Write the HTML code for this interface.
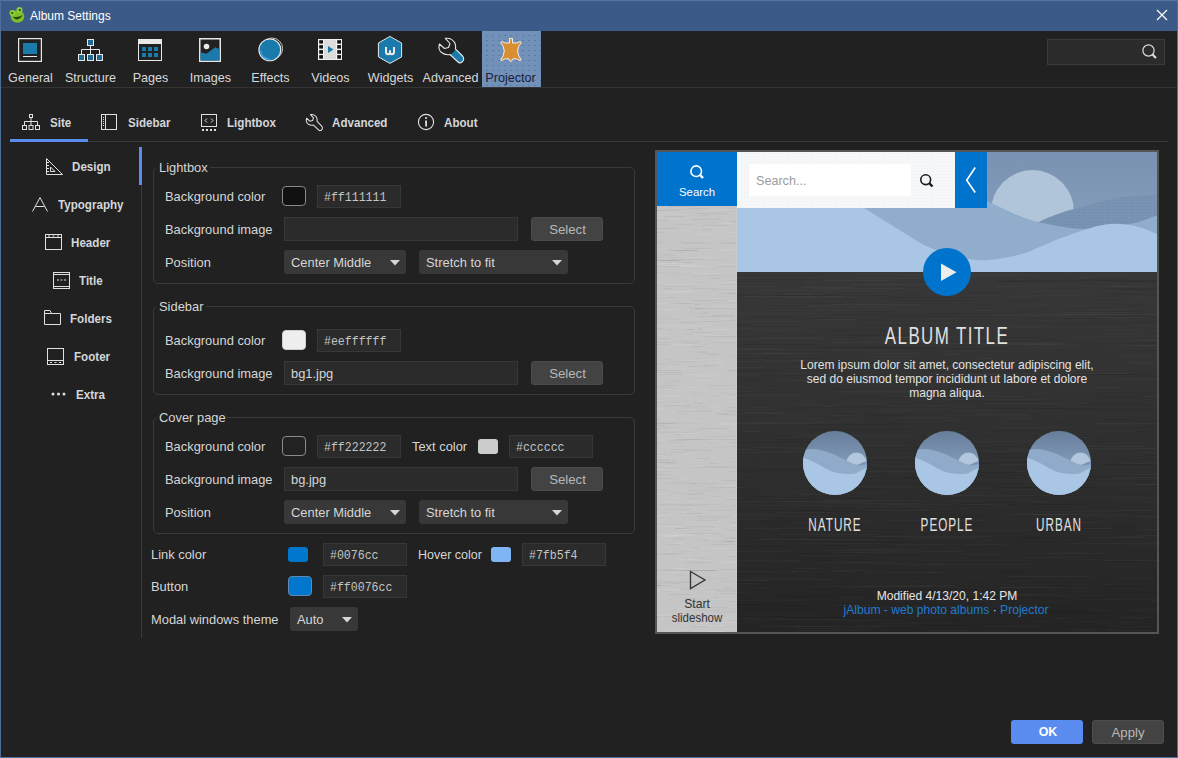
<!DOCTYPE html>
<html><head><meta charset="utf-8"><title>Album Settings</title>
<style>
html,body{margin:0;padding:0;}
body{width:1178px;height:758px;overflow:hidden;background:#212121;position:relative;font-family:"Liberation Sans", sans-serif;}
.t{position:absolute;white-space:pre;}
.r{position:absolute;box-sizing:border-box;}
svg.r{overflow:visible;}
</style></head><body>

<div class="r" style="left:0px;top:0px;width:1178px;height:31px;background:#3b5a87;"></div>
<div class="r" style="left:0px;top:0px;width:1178px;height:1px;background:#5674a0;"></div>
<svg class="r" style="left:8px;top:6px;" width="18" height="18" viewBox="0 0 18 18">
<ellipse cx="9.5" cy="10.5" rx="6.8" ry="6.2" fill="#7fbf2a"/>
<circle cx="4.5" cy="7" r="3" fill="#8fcf3a"/>
<circle cx="11.5" cy="4" r="3" fill="#8fcf3a"/>
<circle cx="4.3" cy="7" r="1.1" fill="#234d07"/>
<circle cx="11.8" cy="4.2" r="1.1" fill="#234d07"/>
<path d="M4.5 10.5 Q9.5 17 14.8 9 Q10 12 4.5 10.5Z" fill="#1e4a06"/>
</svg>
<div class="t" style="left:30px;top:9.84px;font-size:12px;line-height:12px;color:#ffffff;font-weight:normal;font-family:'Liberation Sans', sans-serif;">Album Settings</div>
<svg class="r" style="left:1156px;top:9px;" width="12" height="12" viewBox="0 0 12 12"><path d="M1 1L11 11M11 1L1 11" stroke="#fff" stroke-width="1.2"/></svg>
<div class="r" style="left:482px;top:31px;width:59px;height:56px;background-color:#7291b9;background-image:radial-gradient(circle, rgba(70,100,160,0.5) 0.5px, transparent 0.9px);background-size:6px 5px;background-position:2px 2px;"></div>
<div class="r" style="left:1px;top:87px;width:1176px;height:1px;background:#343434;"></div>
<div class="t" style="left:-169.5px;width:400px;text-align:center;top:71.83px;font-size:12.6px;line-height:12.6px;color:#d9d9d9;font-weight:normal;font-family:'Liberation Sans', sans-serif;">General</div>
<div class="t" style="left:-109.5px;width:400px;text-align:center;top:71.83px;font-size:12.6px;line-height:12.6px;color:#d9d9d9;font-weight:normal;font-family:'Liberation Sans', sans-serif;">Structure</div>
<div class="t" style="left:-49.5px;width:400px;text-align:center;top:71.83px;font-size:12.6px;line-height:12.6px;color:#d9d9d9;font-weight:normal;font-family:'Liberation Sans', sans-serif;">Pages</div>
<div class="t" style="left:10.5px;width:400px;text-align:center;top:71.83px;font-size:12.6px;line-height:12.6px;color:#d9d9d9;font-weight:normal;font-family:'Liberation Sans', sans-serif;">Images</div>
<div class="t" style="left:70.5px;width:400px;text-align:center;top:71.83px;font-size:12.6px;line-height:12.6px;color:#d9d9d9;font-weight:normal;font-family:'Liberation Sans', sans-serif;">Effects</div>
<div class="t" style="left:130.5px;width:400px;text-align:center;top:71.83px;font-size:12.6px;line-height:12.6px;color:#d9d9d9;font-weight:normal;font-family:'Liberation Sans', sans-serif;">Videos</div>
<div class="t" style="left:190.5px;width:400px;text-align:center;top:71.83px;font-size:12.6px;line-height:12.6px;color:#d9d9d9;font-weight:normal;font-family:'Liberation Sans', sans-serif;">Widgets</div>
<div class="t" style="left:250.5px;width:400px;text-align:center;top:71.83px;font-size:12.6px;line-height:12.6px;color:#d9d9d9;font-weight:normal;font-family:'Liberation Sans', sans-serif;">Advanced</div>
<div class="t" style="left:310.5px;width:400px;text-align:center;top:71.83px;font-size:12.6px;line-height:12.6px;color:#1c1c3c;font-weight:normal;font-family:'Liberation Sans', sans-serif;">Projector</div>
<svg class="r" style="left:18px;top:38px;" width="24" height="24" viewBox="0 0 24 24"><rect x="0.6" y="0.6" width="22.8" height="22.8" fill="none" stroke="#e8e8e8" stroke-width="1.2"/>
<rect x="5" y="5" width="14" height="11" fill="#1a7aab"/><rect x="5" y="18" width="14" height="1" fill="#e8e8e8"/></svg>
<svg class="r" style="left:78px;top:39px;" width="25" height="23" viewBox="0 0 25 23"><g stroke="#e8e8e8" stroke-width="1" fill="#1d6a93">
<rect x="9.5" y="0.5" width="6" height="6"/><rect x="0.5" y="15.5" width="6" height="6"/><rect x="9.5" y="15.5" width="6" height="6"/><rect x="18.5" y="15.5" width="6" height="6"/></g>
<path d="M12.5 6.5V15.5M3.5 15.5V10.5H21.5V15.5" stroke="#e8e8e8" stroke-width="1" fill="none"/></svg>
<svg class="r" style="left:138px;top:39px;" width="24" height="22" viewBox="0 0 24 22"><rect x="0.5" y="0.5" width="23" height="21" fill="none" stroke="#e8e8e8" stroke-width="1"/>
<rect x="0" y="0" width="24" height="5" fill="#e8e8e8"/>
<g fill="#1a7aab"><rect x="4" y="8" width="4" height="4"/><rect x="10" y="8" width="4" height="4"/><rect x="16" y="8" width="4" height="4"/>
<rect x="4" y="14" width="4" height="4"/><rect x="10" y="14" width="4" height="4"/><rect x="16" y="14" width="4" height="4"/></g></svg>
<svg class="r" style="left:199px;top:38px;" width="22" height="24" viewBox="0 0 22 24"><rect x="0.75" y="0.75" width="20.5" height="22.5" fill="none" stroke="#e8e8e8" stroke-width="1.5"/>
<circle cx="7.5" cy="8.5" r="2.8" fill="#e8e8e8"/>
<path d="M1.5 14.2 L7.5 15.8 L16.2 9.2 L20.5 11 V22.5 H1.5Z" fill="#1a7aab"/></svg>
<svg class="r" style="left:258px;top:37px;" width="25" height="25" viewBox="0 0 25 25"><circle cx="14" cy="11.6" r="10.6" fill="none" stroke="#c4c4c4" stroke-width="1"/>
<circle cx="13.6" cy="12" r="9.4" fill="none" stroke="#7a7a7a" stroke-width="0.8"/>
<circle cx="11.8" cy="12.9" r="10.9" fill="#1a7aab" stroke="#e8e8e8" stroke-width="1.1"/>
<path d="M2.6 13.5 A 9.3 9.3 0 0 0 12 22.2" fill="none" stroke="#4fa8e6" stroke-width="1.1"/></svg>
<svg class="r" style="left:318px;top:39px;" width="24" height="21" viewBox="0 0 24 21"><rect x="0" y="0" width="24" height="21" fill="#f2f2f2"/><rect x="6" y="1" width="12" height="19" fill="#dcdcdc"/>
<g fill="#141414"><rect x="1.2" y="1.2" width="3.8" height="3.4"/><rect x="1.2" y="6.1" width="3.8" height="3.5"/><rect x="1.2" y="11.1" width="3.8" height="3.7"/><rect x="1.2" y="16.1" width="3.8" height="3.6"/>
<rect x="19.2" y="1.2" width="3.8" height="3.4"/><rect x="19.2" y="6.1" width="3.8" height="3.5"/><rect x="19.2" y="11.1" width="3.8" height="3.7"/><rect x="19.2" y="16.1" width="3.8" height="3.6"/></g>
<path d="M10 7L15.5 10.5L10 14Z" fill="#1a7aab"/></svg>
<svg class="r" style="left:378px;top:36px;" width="24" height="28" viewBox="0 0 24 28"><path d="M11.9 0.4 L23.6 7 V20.9 L11.9 27.4 L0.4 20.9 V7Z" fill="#1a7aab" stroke="#e8e8e8" stroke-width="1"/>
<path d="M8 11 V15.8 Q8 18.3 10 18.3 Q12 18.3 12 16.3 V14.3 M12 16.3 Q12 18.3 14 18.3 Q16 18.3 16 15.8 V11" fill="none" stroke="#f0e8e4" stroke-width="2"/></svg>
<svg class="r" style="left:436px;top:35px;" width="32" height="32" viewBox="0 0 32 32"><path d="M9.3 3.4 C 14 2.5, 18.5 5.5, 19.3 9.5 C 19.8 11.5, 19.6 13, 19.4 13.8 L 26.5 21 C 28.3 22.8, 28 25.5, 26 27 C 24.5 28.2, 23 28, 22 27 L 14 19.5 C 11 20, 8 19.5, 5.5 17.5 C 3 15.5, 2.6 12, 3.4 9 L 8.5 13.5 L 12.5 12.5 L 14 8.5 Z" fill="#212121"/>
<path d="M19.4 13.8 L26.5 21 C 28.3 22.8 28 25.5 26 27 C 24.5 28.2 23 28 22 27 L14 19.5 C 16.5 18.5, 18.8 16.5, 19.4 13.8Z" fill="#1a7aab"/>
<path d="M9.3 3.4 C 14 2.5, 18.5 5.5, 19.3 9.5 C 19.8 11.5, 19.6 13, 19.4 13.8 L 26.5 21 C 28.3 22.8, 28 25.5, 26 27 C 24.5 28.2, 23 28, 22 27 L 14 19.5 C 11 20, 8 19.5, 5.5 17.5 C 3 15.5, 2.6 12, 3.4 9 L 8.5 13.5 L 12.5 12.5 L 14 8.5 Z" fill="none" stroke="#e8e8e8" stroke-width="1.1" stroke-linejoin="round"/></svg>
<svg class="r" style="left:496px;top:34px;" width="32" height="32" viewBox="0 0 32 32"><path d="M13.5 4.5 H16.5 V9 Q20 9.8 24.5 7.5 L25.2 8.6 Q22 12 21.6 17 Q22 22 25.3 26 L24.5 26.6 Q20 24 17 24.8 L15.2 27.4 L14.3 27.4 L13 24.8 Q9.5 24 5.3 26.6 L4.6 26 Q8 22 8.3 17 Q8 12 4.7 8.6 L5.4 7.5 Q9.5 9.8 13.5 9 Z" fill="#d98f30" stroke="#eef0f0" stroke-width="1"/></svg>
<div class="r" style="left:1047px;top:39px;width:118px;height:26px;background:#2b2b2b;border:1px solid #3b3b3b;"></div>
<svg class="r" style="left:1142px;top:44px;" width="16" height="16" viewBox="0 0 16 16"><circle cx="6.5" cy="6.5" r="5.6" fill="none" stroke="#dcdcdc" stroke-width="1.2"/><path d="M10.5 10.5 L14 14" stroke="#dcdcdc" stroke-width="2.2"/></svg>
<div class="r" style="left:88px;top:141px;width:1080px;height:1px;background:#3a3a3a;"></div>
<div class="r" style="left:10px;top:139px;width:78px;height:3px;background:#5b8def;"></div>
<div class="t" style="left:50px;top:116.84px;font-size:12.0px;line-height:12.0px;color:#d3d6da;font-weight:bold;font-family:'Liberation Sans', sans-serif;transform:scaleX(0.967);transform-origin:0 0;">Site</div>
<div class="t" style="left:128px;top:116.84px;font-size:12.0px;line-height:12.0px;color:#d3d6da;font-weight:bold;font-family:'Liberation Sans', sans-serif;transform:scaleX(0.967);transform-origin:0 0;">Sidebar</div>
<div class="t" style="left:227px;top:116.84px;font-size:12.0px;line-height:12.0px;color:#d3d6da;font-weight:bold;font-family:'Liberation Sans', sans-serif;transform:scaleX(0.967);transform-origin:0 0;">Lightbox</div>
<div class="t" style="left:332px;top:116.84px;font-size:12.0px;line-height:12.0px;color:#d3d6da;font-weight:bold;font-family:'Liberation Sans', sans-serif;transform:scaleX(0.967);transform-origin:0 0;">Advanced</div>
<div class="t" style="left:444px;top:116.84px;font-size:12.0px;line-height:12.0px;color:#d3d6da;font-weight:bold;font-family:'Liberation Sans', sans-serif;transform:scaleX(0.967);transform-origin:0 0;">About</div>
<svg class="r" style="left:22px;top:114px;" width="18" height="16" viewBox="0 0 18 16"><g fill="none" stroke="#e0e0e0" stroke-width="1"><rect x="7.5" y="0.5" width="3" height="3"/>
<rect x="0.5" y="11.5" width="4" height="4"/><rect x="7" y="11.5" width="4" height="4"/><rect x="13.5" y="11.5" width="4" height="4"/>
<path d="M9 3.5V11.5M2.5 11.5V7.5H15.5V11.5"/></g></svg>
<svg class="r" style="left:101px;top:114px;" width="17" height="16" viewBox="0 0 17 16"><g fill="none" stroke="#e0e0e0" stroke-width="1"><rect x="0.5" y="0.5" width="15" height="15"/><path d="M4.5 0.5V15.5"/></g>
<g fill="#e0e0e0"><rect x="2" y="3" width="1" height="1"/><rect x="2" y="5" width="1" height="1"/><rect x="2" y="7" width="1" height="1"/><rect x="2" y="9" width="1" height="1"/><rect x="2" y="11" width="1" height="1"/></g></svg>
<svg class="r" style="left:201px;top:114px;" width="17" height="18" viewBox="0 0 17 18"><rect x="0.5" y="0.5" width="15" height="12" fill="none" stroke="#e0e0e0" stroke-width="1"/>
<path d="M6 4.5L4 6.5L6 8.5M10 4.5L12 6.5L10 8.5" fill="none" stroke="#e0e0e0" stroke-width="1"/>
<g fill="#e0e0e0"><rect x="1" y="15" width="2" height="2"/><rect x="5" y="15" width="2" height="2"/><rect x="9" y="15" width="2" height="2"/><rect x="13" y="15" width="2" height="2"/></g></svg>
<svg class="r" style="left:304.5px;top:112.5px;" width="19" height="19" viewBox="1 1 29 29"><path d="M9.3 3.4 C 14 2.5, 18.5 5.5, 19.3 9.5 C 19.8 11.5, 19.6 13, 19.4 13.8 L 26.5 21 C 28.3 22.8, 28 25.5, 26 27 C 24.5 28.2, 23 28, 22 27 L 14 19.5 C 11 20, 8 19.5, 5.5 17.5 C 3 15.5, 2.6 12, 3.4 9 L 8.5 13.5 L 12.5 12.5 L 14 8.5 Z" fill="none" stroke="#e0e0e0" stroke-width="1.6" stroke-linejoin="round"/></svg>
<svg class="r" style="left:417px;top:113px;" width="18" height="18" viewBox="0 0 18 18"><circle cx="9" cy="9" r="7.6" fill="none" stroke="#e0e0e0" stroke-width="1.1"/>
<rect x="8.2" y="7.5" width="1.8" height="6" fill="#e0e0e0"/><circle cx="9.1" cy="5" r="1.1" fill="#e0e0e0"/></svg>
<div class="r" style="left:141px;top:147px;width:1px;height:491px;background:#3a3a3a;"></div>
<div class="r" style="left:139px;top:147px;width:3px;height:38px;background:#5b8def;"></div>
<div class="t" style="left:72px;top:160.84px;font-size:12.0px;line-height:12.0px;color:#d3d6da;font-weight:bold;font-family:'Liberation Sans', sans-serif;transform:scaleX(0.967);transform-origin:0 0;">Design</div>
<div class="t" style="left:58px;top:198.84px;font-size:12.0px;line-height:12.0px;color:#d3d6da;font-weight:bold;font-family:'Liberation Sans', sans-serif;transform:scaleX(0.967);transform-origin:0 0;">Typography</div>
<div class="t" style="left:71px;top:236.84px;font-size:12.0px;line-height:12.0px;color:#d3d6da;font-weight:bold;font-family:'Liberation Sans', sans-serif;transform:scaleX(0.967);transform-origin:0 0;">Header</div>
<div class="t" style="left:78.7px;top:274.84px;font-size:12.0px;line-height:12.0px;color:#d3d6da;font-weight:bold;font-family:'Liberation Sans', sans-serif;transform:scaleX(0.967);transform-origin:0 0;">Title</div>
<div class="t" style="left:70px;top:312.84px;font-size:12.0px;line-height:12.0px;color:#d3d6da;font-weight:bold;font-family:'Liberation Sans', sans-serif;transform:scaleX(0.967);transform-origin:0 0;">Folders</div>
<div class="t" style="left:73.5px;top:350.84px;font-size:12.0px;line-height:12.0px;color:#d3d6da;font-weight:bold;font-family:'Liberation Sans', sans-serif;transform:scaleX(0.967);transform-origin:0 0;">Footer</div>
<div class="t" style="left:76px;top:388.84px;font-size:12.0px;line-height:12.0px;color:#d3d6da;font-weight:bold;font-family:'Liberation Sans', sans-serif;transform:scaleX(0.967);transform-origin:0 0;">Extra</div>
<svg class="r" style="left:46px;top:158px;" width="17" height="17" viewBox="0 0 17 17"><path d="M0.5 0.5 L16.5 16.5 H0.5Z" fill="none" stroke="#e0e0e0" stroke-width="1"/>
<path d="M4.5 9 L4.5 13.5 L9 13.5Z" fill="none" stroke="#e0e0e0" stroke-width="1"/>
<g fill="#e0e0e0"><rect x="1" y="4" width="2" height="1"/><rect x="1" y="7" width="2" height="1"/><rect x="1" y="10" width="2" height="1"/><rect x="1" y="13" width="2" height="1"/></g></svg>
<svg class="r" style="left:32px;top:197px;" width="17" height="15" viewBox="0 0 17 15"><path d="M0.5 14.5 L8 0.5 L15.5 14.5 M3.5 9.5 H12.5" fill="none" stroke="#e0e0e0" stroke-width="1"/></svg>
<svg class="r" style="left:45px;top:234px;" width="17" height="16" viewBox="0 0 17 16"><rect x="0.5" y="0.5" width="16" height="15" fill="none" stroke="#e0e0e0" stroke-width="1"/><path d="M0.5 3.5H16.5" stroke="#e0e0e0"/>
<g fill="#e0e0e0"><rect x="3" y="1.5" width="2" height="1"/><rect x="7.5" y="1.5" width="2" height="1"/><rect x="12" y="1.5" width="2" height="1"/></g></svg>
<svg class="r" style="left:53px;top:272px;" width="17" height="17" viewBox="0 0 17 17"><rect x="0.5" y="0.5" width="16" height="16" fill="none" stroke="#e0e0e0" stroke-width="1"/><path d="M0.5 2.5H16.5M0.5 14.5H16.5" stroke="#e0e0e0"/>
<g fill="#e0e0e0"><rect x="4" y="7.5" width="2" height="1"/><rect x="7.5" y="7.5" width="2" height="1"/><rect x="11" y="7.5" width="2" height="1"/></g></svg>
<svg class="r" style="left:44px;top:310px;" width="17" height="15" viewBox="0 0 17 15"><path d="M0.5 14.5V0.5H6L7.5 3.5H16.5V14.5Z M0.5 3.5H7.5" fill="none" stroke="#e0e0e0" stroke-width="1"/></svg>
<svg class="r" style="left:47px;top:348px;" width="17" height="17" viewBox="0 0 17 17"><rect x="0.5" y="0.5" width="16" height="16" fill="none" stroke="#e0e0e0" stroke-width="1"/><path d="M0.5 12.5H16.5" stroke="#e0e0e0"/>
<g fill="#e0e0e0"><rect x="3" y="14" width="2" height="1"/><rect x="7.5" y="14" width="2" height="1"/><rect x="12" y="14" width="2" height="1"/></g></svg>
<svg class="r" style="left:51px;top:392px;" width="15" height="4" viewBox="0 0 15 4"><g fill="#e0e0e0"><circle cx="2" cy="2" r="1.5"/><circle cx="7.5" cy="2" r="1.5"/><circle cx="13" cy="2" r="1.5"/></g></svg>
<div class="r" style="left:153px;top:167px;width:482px;height:117px;border:1px solid #3a3a3a;border-radius:5px;"></div>
<div class="r" style="left:156px;top:164px;width:54px;height:6px;background:#212121;"></div>
<div class="t" style="left:159px;top:162.08px;font-size:12.9px;line-height:12.9px;color:#d6d6d6;font-weight:normal;font-family:'Liberation Sans', sans-serif;">Lightbox</div>
<div class="t" style="left:165px;top:191.08px;font-size:12.9px;line-height:12.9px;color:#d6d6d6;font-weight:normal;font-family:'Liberation Sans', sans-serif;">Background color</div>
<div class="r" style="left:282px;top:186px;width:24px;height:20px;background:#111111;border:1px solid #8a8a8a;border-radius:4px;"></div>
<div class="r" style="left:317px;top:185px;width:84px;height:23px;background:#2b2b2b;border:1px solid #373737;"></div>
<div class="t" style="left:324.0px;top:191.80px;font-size:12.0px;line-height:12.0px;color:#c4c4c4;font-weight:normal;font-family:'Liberation Mono', monospace;transform:scaleX(0.962);transform-origin:0 0;">#ff111111</div>
<div class="t" style="left:165px;top:224.08px;font-size:12.9px;line-height:12.9px;color:#d6d6d6;font-weight:normal;font-family:'Liberation Sans', sans-serif;">Background image</div>
<div class="r" style="left:284px;top:217px;width:234px;height:24px;background:#2b2b2b;border:1px solid #373737;"></div>
<div class="r" style="left:531px;top:217px;width:72px;height:24px;background:#434343;border:1px solid #4b4b4b;border-radius:3px;"></div>
<div class="t" style="left:367.5px;width:400px;text-align:center;top:222.83px;font-size:13.2px;line-height:13.2px;color:#b8b8b8;font-weight:normal;font-family:'Liberation Sans', sans-serif;">Select</div>
<div class="t" style="left:165px;top:257.08px;font-size:12.9px;line-height:12.9px;color:#d6d6d6;font-weight:normal;font-family:'Liberation Sans', sans-serif;">Position</div>
<div class="r" style="left:284px;top:250px;width:122px;height:24px;background:#383838;border-radius:3px;"></div>
<div class="t" style="left:291px;top:257.08px;font-size:12.9px;line-height:12.9px;color:#d6d6d6;font-weight:normal;font-family:'Liberation Sans', sans-serif;">Center Middle</div>
<svg class="r" style="left:389.5px;top:260px;" width="10" height="6" viewBox="0 0 10 6"><path d="M0 0H10L5 5.5Z" fill="#d6d6d6"/></svg>
<div class="r" style="left:419px;top:250px;width:149px;height:24px;background:#383838;border-radius:3px;"></div>
<div class="t" style="left:426px;top:257.08px;font-size:12.9px;line-height:12.9px;color:#d6d6d6;font-weight:normal;font-family:'Liberation Sans', sans-serif;">Stretch to fit</div>
<svg class="r" style="left:551.5px;top:260px;" width="10" height="6" viewBox="0 0 10 6"><path d="M0 0H10L5 5.5Z" fill="#d6d6d6"/></svg>
<div class="r" style="left:153px;top:306px;width:482px;height:89px;border:1px solid #3a3a3a;border-radius:5px;"></div>
<div class="r" style="left:156px;top:303px;width:50px;height:6px;background:#212121;"></div>
<div class="t" style="left:159px;top:301.08px;font-size:12.9px;line-height:12.9px;color:#d6d6d6;font-weight:normal;font-family:'Liberation Sans', sans-serif;">Sidebar</div>
<div class="t" style="left:165px;top:335.08px;font-size:12.9px;line-height:12.9px;color:#d6d6d6;font-weight:normal;font-family:'Liberation Sans', sans-serif;">Background color</div>
<div class="r" style="left:282px;top:330px;width:24px;height:20px;background:#eeeeee;border:1px solid #cfcfcf;border-radius:4px;"></div>
<div class="r" style="left:317px;top:329px;width:84px;height:23px;background:#2b2b2b;border:1px solid #373737;"></div>
<div class="t" style="left:324.0px;top:335.80px;font-size:12.0px;line-height:12.0px;color:#c4c4c4;font-weight:normal;font-family:'Liberation Mono', monospace;transform:scaleX(0.962);transform-origin:0 0;">#eeffffff</div>
<div class="t" style="left:165px;top:368.08px;font-size:12.9px;line-height:12.9px;color:#d6d6d6;font-weight:normal;font-family:'Liberation Sans', sans-serif;">Background image</div>
<div class="r" style="left:284px;top:361px;width:234px;height:24px;background:#2b2b2b;border:1px solid #373737;"></div>
<div class="t" style="left:291px;top:368.08px;font-size:12.9px;line-height:12.9px;color:#d6d6d6;font-weight:normal;font-family:'Liberation Sans', sans-serif;">bg1.jpg</div>
<div class="r" style="left:531px;top:361px;width:72px;height:24px;background:#434343;border:1px solid #4b4b4b;border-radius:3px;"></div>
<div class="t" style="left:367.5px;width:400px;text-align:center;top:366.83px;font-size:13.2px;line-height:13.2px;color:#b8b8b8;font-weight:normal;font-family:'Liberation Sans', sans-serif;">Select</div>
<div class="r" style="left:153px;top:417px;width:482px;height:117px;border:1px solid #3a3a3a;border-radius:5px;"></div>
<div class="r" style="left:156px;top:414px;width:70px;height:6px;background:#212121;"></div>
<div class="t" style="left:159px;top:412.08px;font-size:12.9px;line-height:12.9px;color:#d6d6d6;font-weight:normal;font-family:'Liberation Sans', sans-serif;">Cover page</div>
<div class="t" style="left:165px;top:441.08px;font-size:12.9px;line-height:12.9px;color:#d6d6d6;font-weight:normal;font-family:'Liberation Sans', sans-serif;">Background color</div>
<div class="r" style="left:282px;top:436px;width:24px;height:20px;background:#222222;border:1px solid #8a8a8a;border-radius:4px;"></div>
<div class="r" style="left:317px;top:435px;width:84px;height:23px;background:#2b2b2b;border:1px solid #373737;"></div>
<div class="t" style="left:324.0px;top:441.80px;font-size:12.0px;line-height:12.0px;color:#c4c4c4;font-weight:normal;font-family:'Liberation Mono', monospace;transform:scaleX(0.962);transform-origin:0 0;">#ff222222</div>
<div class="t" style="left:412px;top:441.08px;font-size:12.9px;line-height:12.9px;color:#d6d6d6;font-weight:normal;font-family:'Liberation Sans', sans-serif;">Text color</div>
<div class="r" style="left:478px;top:439px;width:20px;height:15px;background:#cccccc;border-radius:3px;"></div>
<div class="r" style="left:509px;top:435px;width:84px;height:23px;background:#2b2b2b;border:1px solid #373737;"></div>
<div class="t" style="left:516.0px;top:441.80px;font-size:12.0px;line-height:12.0px;color:#c4c4c4;font-weight:normal;font-family:'Liberation Mono', monospace;transform:scaleX(0.962);transform-origin:0 0;">#cccccc</div>
<div class="t" style="left:165px;top:474.08px;font-size:12.9px;line-height:12.9px;color:#d6d6d6;font-weight:normal;font-family:'Liberation Sans', sans-serif;">Background image</div>
<div class="r" style="left:284px;top:467px;width:234px;height:24px;background:#2b2b2b;border:1px solid #373737;"></div>
<div class="t" style="left:291px;top:474.08px;font-size:12.9px;line-height:12.9px;color:#d6d6d6;font-weight:normal;font-family:'Liberation Sans', sans-serif;">bg.jpg</div>
<div class="r" style="left:531px;top:467px;width:72px;height:24px;background:#434343;border:1px solid #4b4b4b;border-radius:3px;"></div>
<div class="t" style="left:367.5px;width:400px;text-align:center;top:472.83px;font-size:13.2px;line-height:13.2px;color:#b8b8b8;font-weight:normal;font-family:'Liberation Sans', sans-serif;">Select</div>
<div class="t" style="left:165px;top:507.08px;font-size:12.9px;line-height:12.9px;color:#d6d6d6;font-weight:normal;font-family:'Liberation Sans', sans-serif;">Position</div>
<div class="r" style="left:284px;top:500px;width:122px;height:24px;background:#383838;border-radius:3px;"></div>
<div class="t" style="left:291px;top:507.08px;font-size:12.9px;line-height:12.9px;color:#d6d6d6;font-weight:normal;font-family:'Liberation Sans', sans-serif;">Center Middle</div>
<svg class="r" style="left:389.5px;top:510px;" width="10" height="6" viewBox="0 0 10 6"><path d="M0 0H10L5 5.5Z" fill="#d6d6d6"/></svg>
<div class="r" style="left:419px;top:500px;width:149px;height:24px;background:#383838;border-radius:3px;"></div>
<div class="t" style="left:426px;top:507.08px;font-size:12.9px;line-height:12.9px;color:#d6d6d6;font-weight:normal;font-family:'Liberation Sans', sans-serif;">Stretch to fit</div>
<svg class="r" style="left:551.5px;top:510px;" width="10" height="6" viewBox="0 0 10 6"><path d="M0 0H10L5 5.5Z" fill="#d6d6d6"/></svg>
<div class="t" style="left:151px;top:549.08px;font-size:12.9px;line-height:12.9px;color:#d6d6d6;font-weight:normal;font-family:'Liberation Sans', sans-serif;">Link color</div>
<div class="r" style="left:288px;top:547px;width:20px;height:15px;background:#0076cc;border-radius:3px;"></div>
<div class="r" style="left:323px;top:543px;width:84px;height:23px;background:#2b2b2b;border:1px solid #373737;"></div>
<div class="t" style="left:330.0px;top:549.80px;font-size:12.0px;line-height:12.0px;color:#c4c4c4;font-weight:normal;font-family:'Liberation Mono', monospace;transform:scaleX(0.962);transform-origin:0 0;">#0076cc</div>
<div class="t" style="left:418px;top:549.42px;font-size:12.5px;line-height:12.5px;color:#d6d6d6;font-weight:normal;font-family:'Liberation Sans', sans-serif;">Hover color</div>
<div class="r" style="left:491px;top:547px;width:20px;height:15px;background:#7fb5f4;border-radius:3px;"></div>
<div class="r" style="left:522px;top:543px;width:84px;height:23px;background:#2b2b2b;border:1px solid #373737;"></div>
<div class="t" style="left:529.0px;top:549.80px;font-size:12.0px;line-height:12.0px;color:#c4c4c4;font-weight:normal;font-family:'Liberation Mono', monospace;transform:scaleX(0.962);transform-origin:0 0;">#7fb5f4</div>
<div class="t" style="left:151px;top:581.08px;font-size:12.9px;line-height:12.9px;color:#d6d6d6;font-weight:normal;font-family:'Liberation Sans', sans-serif;">Button</div>
<div class="r" style="left:288px;top:576px;width:24px;height:20px;background:#0076cc;border:1px solid #5f88b5;border-radius:4px;"></div>
<div class="r" style="left:323px;top:575px;width:84px;height:23px;background:#2b2b2b;border:1px solid #373737;"></div>
<div class="t" style="left:330.0px;top:581.80px;font-size:12.0px;line-height:12.0px;color:#c4c4c4;font-weight:normal;font-family:'Liberation Mono', monospace;transform:scaleX(0.962);transform-origin:0 0;">#ff0076cc</div>
<div class="t" style="left:151px;top:614.08px;font-size:12.9px;line-height:12.9px;color:#d6d6d6;font-weight:normal;font-family:'Liberation Sans', sans-serif;">Modal windows theme</div>
<div class="r" style="left:290px;top:607px;width:68px;height:24px;background:#383838;border-radius:3px;"></div>
<div class="t" style="left:297px;top:614.08px;font-size:12.9px;line-height:12.9px;color:#d6d6d6;font-weight:normal;font-family:'Liberation Sans', sans-serif;">Auto</div>
<svg class="r" style="left:341.5px;top:617px;" width="10" height="6" viewBox="0 0 10 6"><path d="M0 0H10L5 5.5Z" fill="#d6d6d6"/></svg>
<div class="r" style="left:655px;top:150px;width:504px;height:484px;border:2px solid #555555;"></div>
<div class="r" style="left:737px;top:272px;width:420px;height:360px;background:linear-gradient(180deg,#373737 0%,#303030 45%,#242424 100%);"></div>
<svg class="r" style="left:737px;top:272px;overflow:hidden;" width="420" height="360" viewBox="0 0 420 360"><path d="M17 165.5h60M54 63.5h90M130 96.5h22M-23 311.5h25M123 212.5h97M-54 119.5h72M15 185.5h98M54 325.5h88M358 122.5h61M405 61.5h59M177 202.5h61M-8 332.5h77M386 222.5h34M106 300.5h43M-46 287.5h107M353 273.5h71M207 357.5h43M282 108.5h48M23 249.5h95M103 182.5h21M414 213.5h44M303 269.5h40M222 258.5h34M11 325.5h61M183 42.5h45M93 11.5h48M85 76.5h102M60 135.5h103M175 332.5h73M188 31.5h44M83 260.5h24M72 188.5h113M136 211.5h62M262 270.5h111M161 228.5h49M169 239.5h41M17 79.5h76M101 142.5h92M209 243.5h40M195 99.5h96M318 149.5h118M42 253.5h49M259 55.5h73M119 41.5h63M-16 221.5h16M-27 324.5h13M407 128.5h65M-24 53.5h43M68 202.5h41M353 332.5h22M-58 52.5h70M-22 99.5h57M221 339.5h29M40 329.5h60M94 101.5h26M-16 198.5h101M373 314.5h35M314 314.5h98M343 351.5h102M224 231.5h76M30 117.5h88M238 211.5h48M67 252.5h31M-19 238.5h104M21 103.5h105M369 241.5h77M374 17.5h113M321 316.5h13M43 268.5h46M298 321.5h22M285 265.5h94M-41 54.5h42M150 175.5h104M34 350.5h60M24 108.5h26M188 245.5h64M182 174.5h109M38 169.5h50M265 300.5h21M292 356.5h86M303 287.5h43M170 124.5h103M336 187.5h105M282 235.5h42M239 158.5h64M156 137.5h30M223 276.5h72M352 274.5h55M184 164.5h74M411 45.5h95M402 30.5h80M226 108.5h71M334 267.5h39M282 313.5h100M148 266.5h117M68 159.5h81M243 277.5h39M233 342.5h69M264 232.5h15M79 319.5h90M78 251.5h46M153 79.5h53M106 124.5h36M294 175.5h77M361 251.5h69M165 22.5h16M-38 114.5h30M-49 248.5h111M166 284.5h69M48 261.5h26M-46 197.5h94M391 321.5h90M222 20.5h49M159 105.5h96M220 60.5h64M37 250.5h110M-20 125.5h27M93 80.5h87M37 245.5h37M303 263.5h63M-56 224.5h95M56 58.5h33M-53 21.5h99M-38 250.5h114M221 182.5h51M387 148.5h97M196 249.5h71M397 159.5h26M263 23.5h28M231 182.5h83M-43 357.5h81M-23 174.5h34M268 274.5h11M104 108.5h51M144 306.5h42M276 78.5h87M72 316.5h114M391 203.5h52M-41 7.5h27M189 61.5h27M118 39.5h37M261 36.5h112M210 104.5h31M63 130.5h43M265 268.5h73M62 180.5h59M194 212.5h92" stroke="#000000" stroke-opacity="0.025" stroke-width="1"/><path d="M-12 274.5h56M216 73.5h25M32 349.5h23M295 174.5h54M98 359.5h92M379 353.5h75M-8 26.5h10M92 270.5h92M-16 170.5h112M-50 67.5h11M386 9.5h66M106 226.5h88M109 196.5h76M326 138.5h26M147 132.5h29M41 175.5h116M283 259.5h46M210 299.5h119M362 22.5h116M159 321.5h103M405 71.5h77M363 8.5h97M367 192.5h67M-59 135.5h68M109 75.5h42M124 134.5h26M414 61.5h35M392 219.5h13M407 204.5h80M70 152.5h104M192 116.5h14M71 31.5h34M92 141.5h10M33 254.5h11M361 155.5h98M60 345.5h105M248 229.5h43M-6 3.5h91M44 39.5h14M-53 66.5h16M101 247.5h16M-39 98.5h81M214 129.5h90M75 190.5h58M415 299.5h94M251 265.5h92M26 7.5h43M140 108.5h89M264 329.5h15M358 102.5h114M191 41.5h110M175 119.5h26M36 167.5h43M309 341.5h93M217 233.5h36M267 8.5h111M261 215.5h99M38 324.5h70M179 211.5h47M90 335.5h42M25 273.5h88M-43 73.5h37M110 206.5h74M310 204.5h80M37 23.5h115M-30 336.5h110M-40 108.5h95M336 215.5h22M138 348.5h86M311 310.5h11M366 147.5h28M80 75.5h118M302 238.5h36M236 203.5h76M385 104.5h120M-11 218.5h67M267 306.5h60M71 46.5h50M342 132.5h75M414 49.5h59M265 9.5h59M383 17.5h92M252 232.5h98M206 55.5h38M341 137.5h90M153 76.5h118M-4 310.5h58M209 200.5h81M411 153.5h78M163 317.5h76M196 191.5h61M165 205.5h108M115 353.5h115M263 215.5h30M333 254.5h80M-33 10.5h38M44 258.5h39M-53 159.5h59M78 58.5h87M369 289.5h39M70 266.5h65M-60 178.5h24M401 146.5h15M296 310.5h16M153 44.5h98M157 178.5h66M318 257.5h98M73 286.5h32M410 183.5h21M314 314.5h93M209 326.5h118M370 16.5h88M383 320.5h29M-19 317.5h113M109 346.5h87M296 293.5h24M8 225.5h120M258 44.5h35M388 301.5h42M33 38.5h89M336 102.5h64M69 157.5h103M116 216.5h78M98 331.5h93M149 192.5h58M60 299.5h35M54 91.5h97M414 256.5h42M371 44.5h89M147 25.5h98M-27 72.5h106M267 90.5h115M126 52.5h55M184 324.5h103M278 266.5h40M202 69.5h106" stroke="#000000" stroke-opacity="0.065" stroke-width="1"/><path d="M-41 109.5h21M239 295.5h60M125 232.5h48M252 189.5h82M140 286.5h60M264 246.5h61M126 51.5h88M185 238.5h71M205 102.5h73M344 14.5h45M126 178.5h20M68 14.5h37M337 2.5h112M256 242.5h102M392 54.5h81M-23 161.5h95M278 329.5h56M203 220.5h61M223 173.5h68M-3 32.5h110M75 43.5h44M349 29.5h98M97 259.5h98M294 349.5h92M8 21.5h91M321 33.5h104M406 245.5h97M86 264.5h69M77 230.5h59M399 254.5h72M153 72.5h54M11 218.5h80M115 89.5h81M222 43.5h109M238 268.5h34M300 210.5h93M125 215.5h97M412 74.5h60M12 305.5h63M-20 57.5h31M-40 207.5h58M-20 305.5h75M164 101.5h41M84 78.5h84M51 179.5h14M281 145.5h49M162 3.5h30M235 207.5h56M27 258.5h28M136 80.5h55M354 91.5h70M341 334.5h27M393 67.5h72M199 315.5h40M-6 155.5h76M259 187.5h116M145 138.5h113M212 31.5h13M276 282.5h35M-7 115.5h43M14 87.5h14M415 318.5h30M66 54.5h36M263 323.5h46M215 24.5h82M359 294.5h46M235 133.5h30M19 316.5h102M248 167.5h76M80 222.5h35M45 143.5h59M377 204.5h111M263 256.5h47M323 300.5h92M238 358.5h119M339 64.5h116M276 7.5h11M193 101.5h98M-31 285.5h71M44 176.5h93M-35 293.5h61M-9 89.5h94M296 294.5h61M183 79.5h108M269 42.5h70M2 342.5h119M180 224.5h96M138 192.5h97M337 350.5h73M345 4.5h59M205 143.5h87M70 67.5h117M133 92.5h20M129 285.5h100M375 229.5h30M-32 247.5h22M26 194.5h66M396 346.5h11M171 38.5h53M395 283.5h28M154 136.5h62M232 138.5h117M81 111.5h83M329 253.5h45M386 68.5h95M314 55.5h73M351 271.5h78M54 45.5h89M307 48.5h32M2 56.5h25M209 308.5h14M-9 318.5h42M15 273.5h66M250 34.5h54M163 74.5h83M160 350.5h59M286 304.5h54M125 87.5h50M198 106.5h34M-58 283.5h48M-53 300.5h95M306 73.5h40M27 88.5h55M-13 66.5h35M337 90.5h118M-40 346.5h61M364 315.5h38M218 120.5h43M123 86.5h54M283 249.5h71M124 6.5h72M125 291.5h47M369 202.5h28M13 217.5h46M118 345.5h82M-19 290.5h118M140 351.5h79M-55 348.5h115M-2 225.5h111M167 137.5h11M140 307.5h117M-22 264.5h56M125 50.5h111M336 182.5h98M-10 331.5h35M-31 89.5h120M-13 80.5h12M261 77.5h39M127 310.5h104M401 176.5h112M245 312.5h67M-48 350.5h113M160 294.5h99M397 24.5h50M-25 137.5h15M63 193.5h115M207 178.5h85M307 22.5h66M280 32.5h36M319 118.5h35M0 235.5h21" stroke="#ffffff" stroke-opacity="0.012" stroke-width="1"/><path d="M-14 123.5h80M-30 288.5h89M158 272.5h109M17 175.5h72M296 242.5h95M85 228.5h101M-49 177.5h69M-18 77.5h32M84 134.5h10M318 346.5h16M165 106.5h30M22 354.5h76M249 354.5h54M40 240.5h53M370 312.5h10M349 176.5h92M395 244.5h32M27 81.5h26M352 238.5h93M276 242.5h54M6 256.5h78M42 262.5h98M172 62.5h11M68 9.5h14M399 257.5h78M263 315.5h92M51 354.5h96M88 8.5h68M237 38.5h21M83 24.5h23M-35 41.5h103M269 70.5h46M282 285.5h60M234 142.5h56M78 47.5h41M190 300.5h10M153 248.5h95M-45 242.5h90M125 173.5h44M59 88.5h27M1 119.5h16M44 22.5h42M51 289.5h15M201 258.5h94M-18 66.5h103M359 151.5h76M7 24.5h72M-28 49.5h91M270 304.5h84M-31 81.5h109M93 32.5h90M415 328.5h37M108 199.5h86M-46 358.5h13M118 2.5h72M193 94.5h85M58 358.5h73M396 202.5h105M196 279.5h31M19 267.5h117M58 296.5h26M249 131.5h104M404 124.5h119M205 102.5h54M357 115.5h28M35 347.5h71M211 71.5h116M191 358.5h41M131 238.5h64M32 38.5h91M-50 14.5h88M162 145.5h53M132 313.5h88M-43 215.5h50M236 328.5h16M-53 320.5h64M181 66.5h12M-55 16.5h17M-30 311.5h50M110 290.5h47M38 108.5h21M286 101.5h105M20 18.5h116M18 58.5h75M398 212.5h30M13 150.5h91M201 174.5h27M-20 307.5h116M97 298.5h35M355 265.5h54M365 288.5h56M373 205.5h81M263 339.5h11M-25 95.5h51M271 177.5h31M401 263.5h44M64 15.5h52M-31 151.5h108M138 264.5h116M151 65.5h23M0 299.5h73M360 45.5h52M229 322.5h87M343 5.5h10M2 308.5h28M-46 54.5h22M76 16.5h90M64 34.5h96M53 299.5h62M386 273.5h59M61 176.5h65M114 12.5h113M128 300.5h78M328 256.5h48M-15 159.5h38M30 141.5h13M119 353.5h62M171 320.5h75M330 250.5h34M99 325.5h27M203 3.5h98M297 179.5h48M240 72.5h82M322 42.5h101M62 129.5h17M50 25.5h73M133 84.5h47M105 277.5h76M155 292.5h57M93 70.5h120M374 14.5h34M293 229.5h20M56 250.5h80M295 98.5h67M349 37.5h43M372 354.5h67M-50 116.5h41M306 281.5h61M9 77.5h36M240 86.5h18M42 229.5h87M247 66.5h16M226 232.5h45M259 14.5h27M210 82.5h13M166 124.5h120M344 165.5h13M382 345.5h54M-45 114.5h42M188 2.5h41M406 68.5h48M-11 180.5h106M-14 203.5h63M399 73.5h91M304 181.5h18M350 174.5h58M-60 102.5h83M327 40.5h67" stroke="#ffffff" stroke-opacity="0.03" stroke-width="1"/><path d="M225 23.5h119M339 357.5h41M-25 233.5h117M192 59.5h17M318 66.5h41M25 41.5h67M126 308.5h70M405 31.5h104M-39 141.5h108M10 229.5h63M193 292.5h99M-52 137.5h91M251 42.5h119M-35 134.5h33M196 228.5h96M23 220.5h17M-37 150.5h68M-59 228.5h43M105 280.5h41M122 111.5h33M198 127.5h109M139 305.5h107M258 155.5h82M191 1.5h97M69 148.5h57M265 146.5h29M201 223.5h50M27 65.5h70M147 133.5h93M331 357.5h24M56 131.5h95M178 118.5h38M208 334.5h105M26 226.5h23M328 287.5h36M217 190.5h67M107 120.5h120M218 282.5h51M339 62.5h117M77 290.5h57M408 229.5h57M287 209.5h57M-28 247.5h62M27 266.5h18M342 327.5h119M281 19.5h117M277 199.5h57M123 65.5h65M252 179.5h106M80 314.5h114M410 257.5h71M33 101.5h61M107 347.5h58M333 58.5h77M322 0.5h14M260 315.5h65M-49 23.5h16M356 212.5h88M306 244.5h78M112 163.5h64M205 223.5h108M261 53.5h51M130 12.5h36M270 309.5h14M26 165.5h69M61 356.5h74M24 52.5h94M15 77.5h111M3 328.5h68M187 216.5h68M107 335.5h109M122 314.5h91M144 195.5h17M-5 135.5h38M399 337.5h56M377 73.5h39M341 177.5h29M59 214.5h115M381 306.5h104M296 239.5h82M363 26.5h47M128 6.5h115M358 351.5h89M313 159.5h86M85 231.5h98M98 119.5h87M378 264.5h29M383 191.5h23M328 225.5h93M71 190.5h59M395 191.5h105M-1 244.5h90M316 113.5h17M191 133.5h23M62 133.5h40M35 146.5h56M-14 252.5h11M168 266.5h76M62 267.5h99M113 185.5h61M288 75.5h55M-50 342.5h38M61 222.5h15M95 280.5h88M136 279.5h84M381 83.5h40M87 234.5h102M167 194.5h48M-26 346.5h77M202 159.5h32M265 323.5h102M118 32.5h34M142 148.5h81M65 283.5h59M128 81.5h55M262 192.5h84M396 339.5h23M84 204.5h55M403 180.5h90M41 220.5h106M-41 56.5h111M365 207.5h36M95 143.5h35M-3 229.5h30M107 315.5h58M57 163.5h57M292 72.5h39M63 271.5h82M323 280.5h24M183 288.5h109M-31 316.5h61M413 17.5h96M26 108.5h114M235 169.5h69M136 139.5h44M288 72.5h19M147 232.5h67M103 248.5h32M-49 279.5h107M300 121.5h12M308 174.5h27M260 44.5h88M332 271.5h117M7 140.5h42M63 222.5h39M269 217.5h45M231 110.5h111M361 69.5h48M375 107.5h104M162 93.5h120M79 37.5h100M106 5.5h98M84 278.5h80M144 137.5h64M331 313.5h43M104 22.5h58M-57 76.5h97M156 65.5h111M243 55.5h82M369 358.5h65M395 90.5h18M90 348.5h80" stroke="#ffffff" stroke-opacity="0.02" stroke-width="1"/><path d="M193 268.5h53M331 39.5h81M359 70.5h65M132 314.5h29M323 52.5h53M205 133.5h56M212 114.5h79M238 339.5h114M289 166.5h76M52 239.5h105M96 321.5h77M-6 228.5h94M193 336.5h79M-53 66.5h19M13 45.5h61M260 9.5h78M42 281.5h49M-60 169.5h51M-21 301.5h56M-22 82.5h36M52 281.5h67M78 192.5h53M-44 65.5h64M271 358.5h118M231 119.5h14M260 65.5h42M-60 307.5h11M141 94.5h67M311 340.5h58M74 22.5h105M306 243.5h69M148 126.5h18M155 49.5h73M407 333.5h36M23 334.5h60M321 159.5h82M-51 213.5h120M-15 203.5h83M173 306.5h80M155 332.5h49M-49 91.5h10M60 238.5h67M-20 261.5h16M124 74.5h52M350 7.5h41M270 28.5h115M111 63.5h105M76 26.5h91M343 351.5h76M280 354.5h117M311 223.5h39M-27 23.5h119M390 33.5h106M345 50.5h106M84 131.5h16M333 164.5h87M305 204.5h101M52 269.5h112M300 136.5h58M123 143.5h41M-31 197.5h20M282 46.5h80M283 224.5h24M354 169.5h22M113 64.5h22M362 20.5h25M90 43.5h90M270 185.5h30M137 244.5h109M300 333.5h112M125 148.5h83M19 41.5h50M49 290.5h43M28 113.5h14M326 131.5h35M234 190.5h86M358 125.5h116M235 195.5h106M-11 9.5h99M368 9.5h86M192 238.5h84M371 223.5h82M408 150.5h62M316 124.5h21M43 197.5h80M43 345.5h88M-12 265.5h104M-57 164.5h110M-36 13.5h42M390 78.5h34M203 272.5h28M-54 332.5h97M-57 161.5h120M248 214.5h42M3 33.5h64M301 67.5h43M202 347.5h21M176 358.5h41M281 346.5h29M-55 23.5h69M75 288.5h23M-8 86.5h110M411 321.5h114M145 326.5h21M224 190.5h84M-12 332.5h34M260 58.5h102M93 235.5h25M26 181.5h56M202 190.5h104M-57 160.5h52M200 185.5h119M283 172.5h51M128 257.5h41M31 299.5h48M188 332.5h61M413 13.5h50M152 28.5h88M275 51.5h113M44 256.5h81M-27 7.5h113M196 279.5h24M344 208.5h81M17 196.5h59M166 330.5h80M-60 295.5h70M115 261.5h85M362 120.5h90M253 136.5h94M28 344.5h29M149 62.5h29M94 266.5h67M88 202.5h67M96 91.5h101M148 151.5h65M38 316.5h119" stroke="#000000" stroke-opacity="0.045" stroke-width="1"/></svg>
<div class="r" style="left:657px;top:206px;width:80px;height:426px;background:#c5c5c5;"></div>
<svg class="r" style="left:657px;top:206px;overflow:hidden;" width="80" height="426" viewBox="0 0 80 426"><path d="M-17 292.5h10M21 131.5h16M21 78.5h20M67 77.5h18M51 335.5h9M-14 58.5h26M-18 51.5h26M2 403.5h29M1 155.5h20M-13 274.5h20M8 292.5h18M34 402.5h6M-1 394.5h17M40 153.5h13M49 200.5h4M-14 234.5h24M-3 322.5h20M-10 349.5h30M-2 403.5h13M49 169.5h18M55 144.5h5M46 14.5h21M47 199.5h30M-4 97.5h29M48 39.5h5M74 378.5h5M50 299.5h28M63 248.5h17M30 181.5h10M-14 331.5h19M24 295.5h16M-15 178.5h24M13 140.5h4M40 62.5h14M-17 147.5h20M70 34.5h29M-10 373.5h4M40 48.5h25M31 15.5h18M26 411.5h25M0 23.5h34M-10 31.5h22M11 88.5h31M25 122.5h7M-8 370.5h32M10 138.5h24M-1 197.5h20M34 364.5h10M19 8.5h8M11 402.5h31M16 110.5h11M-16 354.5h14M67 232.5h6M13 356.5h4M73 135.5h19M43 382.5h20M19 197.5h5M42 410.5h10M66 159.5h20M19 45.5h7M4 77.5h19M21 270.5h8M50 83.5h30M36 198.5h25M31 368.5h34M18 309.5h33M75 109.5h25M41 17.5h31M-4 282.5h27M9 215.5h33M2 158.5h17M42 248.5h21M68 292.5h18M45 225.5h21M-1 412.5h13M-11 43.5h14M72 167.5h14M32 166.5h30M-15 247.5h15M17 250.5h9M15 127.5h6M5 330.5h20M42 114.5h18M31 169.5h15M57 363.5h8M50 301.5h15M10 91.5h10M51 130.5h13M31 301.5h31M24 42.5h9M2 331.5h7M70 213.5h31M30 51.5h35M67 47.5h18M54 401.5h16M5 377.5h35M-11 143.5h19M55 345.5h18M38 133.5h9M-18 354.5h8M59 171.5h21M75 417.5h7M75 262.5h13M48 90.5h5M-15 248.5h26M45 177.5h29M7 402.5h19M30 144.5h17M6 223.5h10M26 331.5h27M20 0.5h33M74 403.5h30M23 368.5h18M53 62.5h5M42 64.5h9M14 225.5h19M-6 288.5h30M49 332.5h30M47 204.5h29M25 262.5h33M9 271.5h34M14 206.5h19M13 46.5h32" stroke="#ffffff" stroke-opacity="0.03" stroke-width="1"/><path d="M40 288.5h7M35 353.5h12M5 3.5h21M40 102.5h7M-12 63.5h12M19 345.5h17M30 167.5h13M40 286.5h10M33 145.5h17M50 372.5h19M-4 265.5h22M47 396.5h7M-10 325.5h16M59 404.5h16M-12 253.5h26M31 152.5h27M13 135.5h8M65 420.5h28M-10 364.5h21M-6 158.5h27M-18 111.5h33M72 404.5h16M71 286.5h22M74 370.5h7M30 306.5h8M5 49.5h13M-9 1.5h5M51 44.5h26M70 265.5h9M60 90.5h32M57 338.5h23M14 196.5h9M-15 391.5h18M68 251.5h17M34 175.5h5M56 69.5h24M68 131.5h8M-10 14.5h4M72 97.5h32M-7 318.5h34M40 353.5h16M-10 66.5h33M25 394.5h31M47 54.5h25M25 381.5h16M-18 420.5h18M12 68.5h25M4 176.5h24M-3 51.5h24M21 375.5h26M2 221.5h28M0 109.5h13M-1 217.5h20M25 410.5h14M14 275.5h18M59 118.5h15M74 209.5h19M57 241.5h13M2 152.5h4M0 54.5h9M4 385.5h12M25 324.5h29M46 300.5h31M69 205.5h34M5 311.5h12M2 113.5h23M22 240.5h7M41 334.5h34M20 97.5h22M12 60.5h11M66 186.5h5M51 237.5h4M-1 216.5h19M37 107.5h20M37 371.5h19M37 16.5h23M59 329.5h9M31 280.5h14M42 279.5h16M-7 225.5h33M22 103.5h25M29 172.5h8M-18 283.5h7M-7 157.5h34M5 217.5h34M20 408.5h20M52 282.5h12M38 98.5h35M75 322.5h18M44 356.5h5M28 141.5h13M1 217.5h21M-10 363.5h10M28 89.5h20M41 204.5h15M69 123.5h8M1 268.5h13M32 105.5h4M-18 192.5h10M55 190.5h6M66 402.5h25" stroke="#000000" stroke-opacity="0.015" stroke-width="1"/><path d="M24 364.5h34M13 155.5h28M65 274.5h27M72 102.5h17M36 351.5h13M11 388.5h24M-4 91.5h23M-12 54.5h35M45 19.5h25M2 298.5h35M47 401.5h23M12 287.5h35M27 42.5h29M13 53.5h33M27 128.5h10M62 363.5h28M47 159.5h13M0 138.5h16M35 13.5h30M30 327.5h35M69 87.5h23M-4 136.5h17M59 385.5h30M21 56.5h14M5 179.5h13M55 109.5h21M-3 256.5h22M17 228.5h7M-17 213.5h20M6 10.5h21M-13 237.5h17M38 102.5h33M72 350.5h32M32 2.5h18M10 123.5h6M43 9.5h10M53 257.5h8M8 376.5h31M60 208.5h17M-8 385.5h5M12 0.5h25M-7 14.5h17M64 335.5h13M53 72.5h11M-11 268.5h19M14 246.5h15M47 334.5h5M-14 379.5h18M-13 379.5h27M40 310.5h34M35 140.5h13M49 336.5h27M34 277.5h29M28 392.5h12M19 322.5h17M14 332.5h14M12 234.5h20M41 115.5h25M35 364.5h27M66 153.5h8M71 201.5h10M-14 26.5h22M47 130.5h34M63 387.5h19M68 381.5h7M25 233.5h34M-12 379.5h16M28 277.5h11M-7 219.5h15M46 106.5h5M9 364.5h33M74 299.5h11M35 94.5h34M-18 280.5h6M27 244.5h29M28 320.5h29M6 222.5h6M36 197.5h9M5 54.5h16M-14 348.5h32M39 7.5h32M2 196.5h4M16 97.5h17M14 414.5h9M29 400.5h17M29 288.5h10M62 233.5h27M28 356.5h34M-9 283.5h17M17 44.5h24M-5 166.5h31M45 23.5h11M-12 171.5h10M41 122.5h4M-11 36.5h16M-2 223.5h5M-12 122.5h18M53 383.5h32M53 261.5h18M62 60.5h32M68 335.5h20M5 199.5h28M-3 164.5h6M30 123.5h6M19 233.5h26M52 148.5h12M7 347.5h18M39 252.5h14M-8 54.5h6M29 404.5h33M68 149.5h10M41 222.5h31M38 102.5h6M61 37.5h32M34 420.5h17M41 110.5h19M-17 4.5h20M72 188.5h15M30 364.5h29M10 257.5h9M23 299.5h23M34 126.5h21M8 410.5h12M29 307.5h15M72 236.5h30M57 391.5h5M6 82.5h9" stroke="#000000" stroke-opacity="0.045" stroke-width="1"/><path d="M0 320.5h24M8 104.5h7M58 416.5h35M3 287.5h35M11 138.5h23M47 20.5h10M35 67.5h26M75 339.5h14M1 59.5h35M23 60.5h33M15 78.5h5M66 43.5h17M25 306.5h10M41 27.5h14M21 405.5h4M-4 8.5h34M71 95.5h32M12 413.5h11M28 77.5h14M21 201.5h35M16 227.5h22M65 30.5h35M-13 260.5h29M17 328.5h19M70 184.5h21M-11 264.5h14M69 232.5h33M31 260.5h17M-1 68.5h4M60 279.5h22M53 3.5h17M40 415.5h17M21 154.5h22M62 217.5h25M70 356.5h15M-9 97.5h9M28 181.5h15M29 128.5h27M-4 249.5h11M22 323.5h10M-10 119.5h34M11 85.5h31M39 419.5h30M12 329.5h30M-17 409.5h32M2 135.5h20M71 26.5h20M25 168.5h35M6 6.5h17M24 272.5h7M10 12.5h22M71 348.5h23M63 44.5h21M52 234.5h11M60 76.5h24M27 403.5h10M-11 309.5h18M75 263.5h15M53 425.5h14M27 51.5h31M32 353.5h13M24 59.5h20M-9 11.5h16M37 29.5h20M26 406.5h7M53 24.5h13M-18 263.5h27M-18 420.5h24M60 134.5h25M59 58.5h31M-6 188.5h6M0 383.5h22M-8 44.5h6M51 101.5h15M47 4.5h30M71 207.5h5M61 218.5h28M-4 76.5h11M67 113.5h7M6 366.5h29M-6 203.5h16M45 342.5h32M4 224.5h4M-2 257.5h5M25 174.5h34M-4 190.5h24M61 17.5h16M12 362.5h18M65 123.5h31M20 414.5h21M29 94.5h4M50 336.5h24M33 113.5h4M4 330.5h15M74 319.5h11M67 149.5h21M7 424.5h18M17 198.5h13M6 295.5h14M2 329.5h23M75 415.5h10M51 156.5h14M-10 328.5h23M30 116.5h16M1 103.5h32M-6 57.5h31M47 328.5h9M37 123.5h33M53 65.5h4M66 153.5h10M32 200.5h31M53 356.5h22M3 90.5h9M41 194.5h4" stroke="#ffffff" stroke-opacity="0.09" stroke-width="1"/><path d="M31 160.5h20M32 284.5h30M-10 272.5h30M17 18.5h18M40 312.5h29M73 74.5h17M7 48.5h9M66 114.5h20M-13 68.5h14M24 46.5h4M70 395.5h15M24 351.5h8M34 187.5h9M-1 254.5h20M-12 363.5h29M62 406.5h25M11 44.5h25M35 341.5h8M-11 9.5h11M33 224.5h10M22 201.5h28M46 230.5h30M1 22.5h21M53 338.5h30M28 200.5h29M70 324.5h11M67 293.5h19M72 331.5h28M17 322.5h9M29 411.5h25M64 36.5h34M54 83.5h24M-13 53.5h15M73 15.5h33M1 54.5h27M-8 248.5h25M-2 420.5h10M23 36.5h25M65 204.5h19M-4 22.5h17M-15 373.5h12M-11 410.5h15M2 226.5h34M11 174.5h26M-5 82.5h6M66 332.5h19M70 261.5h21M38 146.5h12M22 383.5h16M-18 122.5h13M10 338.5h13M35 70.5h8M37 98.5h8M30 292.5h15M60 207.5h30M40 298.5h25M7 303.5h27M50 304.5h30M-12 286.5h13M21 369.5h7M-3 164.5h27M49 69.5h10M-2 375.5h16M14 403.5h6M22 116.5h21M11 56.5h4M-12 411.5h14M29 116.5h8M21 205.5h34M67 5.5h13M-12 261.5h35M63 87.5h17M34 82.5h26M27 37.5h28M52 281.5h29M-1 59.5h5M52 179.5h24M45 147.5h14M28 101.5h11M54 96.5h28M36 76.5h9M9 153.5h8M-2 377.5h26M73 240.5h9M2 132.5h11M2 168.5h25M56 136.5h24M-4 217.5h21M55 290.5h10M27 123.5h19M21 216.5h8M26 137.5h14M-8 181.5h23M5 306.5h6M13 243.5h28M72 205.5h6M75 164.5h17M65 375.5h17M44 138.5h6M64 78.5h15M-3 260.5h11M32 261.5h20M11 236.5h15M8 277.5h18M73 316.5h27M69 164.5h29M-1 256.5h14M22 425.5h12M8 44.5h32M17 135.5h26M-4 4.5h25M-14 179.5h24M-8 60.5h27M6 80.5h34M-4 142.5h6M38 314.5h23M20 207.5h5M57 110.5h21M46 260.5h22M71 414.5h35" stroke="#000000" stroke-opacity="0.03" stroke-width="1"/><path d="M72 250.5h13M5 372.5h31M49 335.5h8M45 9.5h9M58 155.5h9M20 336.5h7M43 230.5h19M41 43.5h15M75 75.5h14M65 272.5h11M11 384.5h19M19 16.5h25M30 21.5h15M47 385.5h28M21 139.5h34M50 21.5h23M25 404.5h29M67 211.5h22M-16 184.5h8M58 284.5h6M43 56.5h18M75 223.5h28M42 354.5h13M-18 410.5h6M34 295.5h20M47 315.5h24M12 373.5h10M14 226.5h12M18 353.5h29M-6 91.5h20M13 57.5h14M31 390.5h27M-18 134.5h7M12 189.5h22M-7 251.5h29M-10 97.5h21M9 247.5h28M9 161.5h10M40 239.5h12M28 404.5h8M-1 309.5h27M71 93.5h18M68 12.5h14M42 98.5h16M66 413.5h11M69 319.5h34M72 389.5h15M29 119.5h27M72 176.5h31M-7 42.5h16M48 37.5h26M31 319.5h31M67 411.5h18M61 161.5h7M61 191.5h26M46 129.5h24M62 326.5h34M57 307.5h8M67 6.5h18M7 213.5h24M72 304.5h17M-10 44.5h30M57 98.5h24M15 289.5h5M28 34.5h4M43 170.5h14M57 44.5h12M36 269.5h21M31 322.5h32M-1 85.5h34M-4 194.5h12M8 162.5h33M68 98.5h4M52 187.5h12M-14 122.5h15M69 125.5h13M18 351.5h27M67 338.5h25M42 417.5h12M-13 368.5h8M73 208.5h21M15 337.5h11M75 247.5h25M21 363.5h33M16 8.5h7M38 215.5h22M36 27.5h31M9 121.5h32M-17 185.5h18M41 245.5h4M-6 86.5h35M25 58.5h14M67 101.5h32M4 119.5h33M-4 315.5h12M71 195.5h33M47 425.5h19M-13 202.5h18M1 260.5h24M-5 291.5h31M7 25.5h19M-7 129.5h20M50 333.5h29M49 393.5h34M73 222.5h17M-18 336.5h22M67 24.5h9M35 256.5h11M44 153.5h32M59 99.5h8M55 95.5h31M25 253.5h18M16 184.5h33M24 415.5h22M51 79.5h33" stroke="#ffffff" stroke-opacity="0.06" stroke-width="1"/></svg>
<div class="r" style="left:736px;top:206px;width:1px;height:426px;background:#cacaca;"></div>
<div class="r" style="left:657px;top:152px;width:80px;height:54px;background:#0074cc;"></div>
<svg class="r" style="left:689px;top:164px;" width="16" height="16" viewBox="0 0 16 16"><circle cx="7.2" cy="7.2" r="5.3" fill="none" stroke="#ffffff" stroke-width="1.6"/><path d="M11 11 L14 14" stroke="#ffffff" stroke-width="2.4"/></svg>
<div class="t" style="left:497px;width:400px;text-align:center;top:186.95px;font-size:11.4px;line-height:11.4px;color:#ffffff;font-weight:normal;font-family:'Liberation Sans', sans-serif;">Search</div>
<svg class="r" style="left:689px;top:570px;" width="18" height="20" viewBox="0 0 18 20"><path d="M1.5 1.5 L16 10 L1.5 18.5Z" fill="none" stroke="#333333" stroke-width="1.3" stroke-linejoin="miter"/></svg>
<div class="t" style="left:497px;width:400px;text-align:center;top:598.17px;font-size:12.2px;line-height:12.2px;color:#333333;font-weight:normal;font-family:'Liberation Sans', sans-serif;">Start</div>
<div class="t" style="left:497px;width:400px;text-align:center;top:612.17px;font-size:12.2px;line-height:12.2px;color:#333333;font-weight:normal;font-family:'Liberation Sans', sans-serif;transform:scaleX(0.944);">slideshow</div>
<svg class="r" style="left:737px;top:152px;" width="420" height="120" viewBox="0 0 420 120"><defs><linearGradient id="sky" x1="0" y1="0" x2="0" y2="1"><stop offset="0" stop-color="#7992b1"/><stop offset="1" stop-color="#8ba4c2"/></linearGradient>
<pattern id="dots" width="3" height="3" patternUnits="userSpaceOnUse"><rect width="3" height="3" fill="#7993b3"/><rect width="1" height="1" fill="#6f89aa"/></pattern></defs>
<rect width="420" height="120" fill="url(#sky)"/>
<circle cx="295.5" cy="59.5" r="41.5" fill="#b0c4da"/>
<path d="M250 120 L 290 76 C 301 70, 320 61, 339 56.6 C 355 52, 370 47, 384.6 45.2 C 400 43.5, 410 43, 420 43 V120Z" fill="url(#dots)"/>
<path d="M60 5 C 140 10, 220 35, 254 51 C 275 61, 290 68, 301 70 C 320 74, 335 77, 346.6 77 C 365 76.5, 380 73.5, 393.7 71.7 C 405 69.5, 412 66, 420 63.4 V120 H0 V0Z" fill="#91adcc"/>
<path d="M0 0 H40 C 80 22, 105 42, 127 56 L 185 92 C 205 102, 232 109, 248 108.2 C 265 107, 280 104, 293.5 99 C 310 92, 325 85, 339 80.8 C 352 76, 365 72, 377 71.7 C 392 71.5, 405 75, 420 82 V120 H0Z" fill="#a9c6e5"/>
</svg>
<div class="r" style="left:737px;top:152px;width:218px;height:56px;background-color:#f6f7f9;background-image:radial-gradient(circle, rgba(0,0,0,0.035) 0.5px, transparent 0.8px);background-size:3px 3px;"></div>
<div class="r" style="left:749px;top:164px;width:162px;height:32px;background:#ffffff;"></div>
<div class="t" style="left:756px;top:174.53px;font-size:12.6px;line-height:12.6px;color:#9b9b9b;font-weight:normal;font-family:'Liberation Sans', sans-serif;">Search...</div>
<svg class="r" style="left:919px;top:173px;" width="16" height="16" viewBox="0 0 16 16"><circle cx="6.7" cy="6.7" r="4.9" fill="none" stroke="#1a1a1a" stroke-width="1.6"/><path d="M10.2 10.2 L13.5 13.5" stroke="#1a1a1a" stroke-width="2.4"/></svg>
<div class="r" style="left:955px;top:152px;width:32px;height:56px;background:#0074cc;"></div>
<svg class="r" style="left:955px;top:152px;" width="32" height="56" viewBox="0 0 32 56"><path d="M20.2 15.5 L11.7 28.2 L20.2 40.5" fill="none" stroke="#ffffff" stroke-width="1.6"/></svg>
<svg class="r" style="left:923px;top:248px;" width="48" height="48" viewBox="0 0 48 48"><circle cx="24" cy="24" r="24" fill="#0074cc"/><path d="M18 15.5 L33.5 24.2 L18 33Z" fill="#ececec"/></svg>
<div class="t" style="left:747px;width:400px;text-align:center;top:323.68px;font-size:24px;line-height:24px;color:#e0e0e0;font-weight:normal;font-family:'Liberation Sans', sans-serif;transform:scaleX(0.705);letter-spacing:2px;">ALBUM TITLE</div>
<div class="t" style="left:747px;width:400px;text-align:center;top:359.30px;font-size:12.05px;line-height:12.05px;color:#e2e2e2;font-weight:normal;font-family:'Liberation Sans', sans-serif;">Lorem ipsum dolor sit amet, consectetur adipiscing elit,</div>
<div class="t" style="left:747px;width:400px;text-align:center;top:373.20px;font-size:12.05px;line-height:12.05px;color:#e2e2e2;font-weight:normal;font-family:'Liberation Sans', sans-serif;">sed do eiusmod tempor incididunt ut labore et dolore</div>
<div class="t" style="left:747px;width:400px;text-align:center;top:387.00px;font-size:12.05px;line-height:12.05px;color:#e2e2e2;font-weight:normal;font-family:'Liberation Sans', sans-serif;">magna aliqua.</div>
<svg class="r" style="left:803px;top:431px;" width="64" height="64" viewBox="0 0 64 64"><defs><clipPath id="cc0"><circle cx="32" cy="32" r="32"/></clipPath><linearGradient id="ts0" x1="0" y1="0" x2="0" y2="1"><stop offset="0" stop-color="#677e9b"/><stop offset="0.5" stop-color="#8099b6"/></linearGradient></defs>
<g clip-path="url(#cc0)"><rect width="64" height="64" fill="url(#ts0)"/>
<circle cx="53.5" cy="31.5" r="10" fill="#b3c7dc"/>
<path d="M48 36 C 55 34, 60 31, 64 30 V 38 Z" fill="#7b95b5"/>
<path d="M0 18.4 C 4 18, 8 17.8, 10.9 18 C 18 19, 23 20.5, 27.5 22.1 C 38 26, 46 32, 54.2 34.1 C 58 35, 61 34, 64 33 V64 H0Z" fill="#8fabc9"/>
<path d="M0 26.7 C 7 29, 14 32, 20 36 C 27 40, 33 42.4, 38.5 42.4 C 42 42.8, 45 43, 48.7 42.9 C 54 42.5, 59 39, 64 36.4 V64 H0Z" fill="#a9c6e5"/></g></svg>
<div class="t" style="left:635px;width:400px;text-align:center;top:515.76px;font-size:18px;line-height:18px;color:#e0e0e0;font-weight:normal;font-family:'Liberation Sans', sans-serif;transform:scaleX(0.652);letter-spacing:1.5px;">NATURE</div>
<svg class="r" style="left:915px;top:431px;" width="64" height="64" viewBox="0 0 64 64"><defs><clipPath id="cc1"><circle cx="32" cy="32" r="32"/></clipPath><linearGradient id="ts1" x1="0" y1="0" x2="0" y2="1"><stop offset="0" stop-color="#677e9b"/><stop offset="0.5" stop-color="#8099b6"/></linearGradient></defs>
<g clip-path="url(#cc1)"><rect width="64" height="64" fill="url(#ts1)"/>
<circle cx="53.5" cy="31.5" r="10" fill="#b3c7dc"/>
<path d="M48 36 C 55 34, 60 31, 64 30 V 38 Z" fill="#7b95b5"/>
<path d="M0 18.4 C 4 18, 8 17.8, 10.9 18 C 18 19, 23 20.5, 27.5 22.1 C 38 26, 46 32, 54.2 34.1 C 58 35, 61 34, 64 33 V64 H0Z" fill="#8fabc9"/>
<path d="M0 26.7 C 7 29, 14 32, 20 36 C 27 40, 33 42.4, 38.5 42.4 C 42 42.8, 45 43, 48.7 42.9 C 54 42.5, 59 39, 64 36.4 V64 H0Z" fill="#a9c6e5"/></g></svg>
<div class="t" style="left:747px;width:400px;text-align:center;top:515.76px;font-size:18px;line-height:18px;color:#e0e0e0;font-weight:normal;font-family:'Liberation Sans', sans-serif;transform:scaleX(0.652);letter-spacing:1.5px;">PEOPLE</div>
<svg class="r" style="left:1027px;top:431px;" width="64" height="64" viewBox="0 0 64 64"><defs><clipPath id="cc2"><circle cx="32" cy="32" r="32"/></clipPath><linearGradient id="ts2" x1="0" y1="0" x2="0" y2="1"><stop offset="0" stop-color="#677e9b"/><stop offset="0.5" stop-color="#8099b6"/></linearGradient></defs>
<g clip-path="url(#cc2)"><rect width="64" height="64" fill="url(#ts2)"/>
<circle cx="53.5" cy="31.5" r="10" fill="#b3c7dc"/>
<path d="M48 36 C 55 34, 60 31, 64 30 V 38 Z" fill="#7b95b5"/>
<path d="M0 18.4 C 4 18, 8 17.8, 10.9 18 C 18 19, 23 20.5, 27.5 22.1 C 38 26, 46 32, 54.2 34.1 C 58 35, 61 34, 64 33 V64 H0Z" fill="#8fabc9"/>
<path d="M0 26.7 C 7 29, 14 32, 20 36 C 27 40, 33 42.4, 38.5 42.4 C 42 42.8, 45 43, 48.7 42.9 C 54 42.5, 59 39, 64 36.4 V64 H0Z" fill="#a9c6e5"/></g></svg>
<div class="t" style="left:859px;width:400px;text-align:center;top:515.76px;font-size:18px;line-height:18px;color:#e0e0e0;font-weight:normal;font-family:'Liberation Sans', sans-serif;transform:scaleX(0.652);letter-spacing:1.5px;">URBAN</div>
<div class="t" style="left:747px;width:400px;text-align:center;top:589.60px;font-size:12.05px;line-height:12.05px;color:#e6e6e6;font-weight:normal;font-family:'Liberation Sans', sans-serif;">Modified 4/13/20, 1:42 PM</div>
<div class="t" style="left:746px;width:400px;text-align:center;top:604.36px;font-size:12.1px;line-height:12.1px;color:#dddddd;font-weight:normal;font-family:'Liberation Sans', sans-serif;"><span style="color:#1f7bd0">jAlbum - web photo albums</span> · <span style="color:#1f7bd0">Projector</span></div>
<div class="r" style="left:1011px;top:720px;width:72px;height:24px;background:#5a8cf0;border-radius:3px;"></div>
<div class="t" style="left:848px;width:400px;text-align:center;top:726.00px;font-size:12.4px;line-height:12.4px;color:#ffffff;font-weight:bold;font-family:'Liberation Sans', sans-serif;">OK</div>
<div class="r" style="left:1092px;top:720px;width:72px;height:24px;background:#434343;border:1px solid #4d4d4d;border-radius:3px;"></div>
<div class="t" style="left:928px;width:400px;text-align:center;top:725.83px;font-size:13.2px;line-height:13.2px;color:#b8b8b8;font-weight:normal;font-family:'Liberation Sans', sans-serif;">Apply</div>
<div class="r" style="left:0px;top:0px;width:1px;height:758px;background:#4d6d9b;"></div>
<div class="r" style="left:1177px;top:0px;width:1px;height:758px;background:#4d6d9b;"></div>
<div class="r" style="left:0px;top:757px;width:1178px;height:1px;background:#4d6d9b;"></div>
</body></html>
